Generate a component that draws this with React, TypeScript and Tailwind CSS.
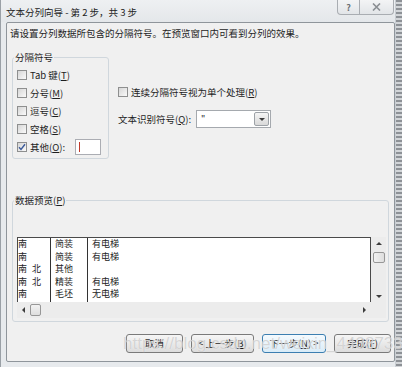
import type { ReactNode } from "react";

type Row = [string, string, string, string];

const previewRows: Row[] = [
  ["南", "", "简装", "有电梯"],
  ["南", "", "简装", "有电梯"],
  ["南", "北", "其他", ""],
  ["南", "北", "精装", "有电梯"],
  ["南", "", "毛坯", "无电梯"],
];

function Check({ checked = false }: { checked?: boolean }) {
  return (
    <span className="flex h-[10px] w-[10px] shrink-0 items-center justify-center border border-[#8e8f8f] bg-gradient-to-br from-[#d6d6d6] to-[#fafafa]">
      {checked && (
        <svg width="8" height="8" viewBox="0 0 8 8">
          <path d="M1 4.2 L3 6.4 L7 1.2" fill="none" stroke="#3b5a9a" strokeWidth="1.4" />
        </svg>
      )}
    </span>
  );
}

function Mn({ children }: { children: ReactNode }) {
  return <u className="underline-offset-[1px]">{children}</u>;
}

function Button({ children, width, focused = false }: { children: ReactNode; width: string; focused?: boolean }) {
  return (
    <button
      type="button"
      className={
        "flex h-[19px] items-center justify-center rounded-[3px] border text-[9.5px] leading-none text-[#1a1a1a] " +
        width +
        (focused
          ? " border-[#3c7fb1] bg-gradient-to-b from-[#f4fafe] to-[#d9ecf8]"
          : " border-[#7a7a7a] bg-gradient-to-b from-[#f6f6f6] to-[#dcdcdc]")
      }
    >
      {children}
    </button>
  );
}

function Arrow({ dir }: { dir: "up" | "down" | "left" | "right" }) {
  const d = {
    up: "M0 4 L3 1 L6 4 Z",
    down: "M0 1 L3 4 L6 1 Z",
    left: "M4 0 L1 3 L4 6 Z",
    right: "M1 0 L4 3 L1 6 Z",
  }[dir];
  const vertical = dir === "up" || dir === "down";
  return (
    <svg width={vertical ? 6 : 5} height={vertical ? 5 : 6} viewBox={vertical ? "0 0 6 5" : "0 0 5 6"}>
      <path d={d} fill="#3c3c3c" />
    </svg>
  );
}

export default function App() {
  return (
    <div className="relative flex h-[367px] w-[402px] overflow-hidden bg-[#e7eaed] font-['Noto_Sans_CJK_SC','Noto_Sans',sans-serif] text-[#1e1e1e]">
      <div className="flex w-[395px] flex-col border-l border-[#9aa0a6]">
        {/* Title bar */}
        <div className="flex h-[22px] items-start justify-between bg-gradient-to-b from-[#eef0f2] to-[#e4e7ea]">
          <div className="pl-[5px] pt-[6px] text-[9.5px] leading-[12px] text-[#222]">
            文本分列向导 - 第 2 步，共 3 步
          </div>
          <div className="flex pr-[1px]">
            <div className="flex h-[15px] w-[23px] items-center justify-center rounded-bl-[4px] border border-t-0 border-[#a9adb2] bg-gradient-to-b from-[#f3f4f5] to-[#e2e5e8] text-[9px] font-bold leading-none text-[#6b6f74]">
              ?
            </div>
            <div className="flex h-[15px] w-[34px] items-center justify-center rounded-br-[4px] border border-t-0 border-l-0 border-[#a9adb2] bg-gradient-to-b from-[#f3f4f5] to-[#e2e5e8]">
              <svg width="9" height="8" viewBox="0 0 9 8">
                <path d="M1 0.5 L8 7.5 M8 0.5 L1 7.5" stroke="#8a8e93" strokeWidth="1.6" />
              </svg>
            </div>
          </div>
        </div>

        <div className="flex">
          <div className="w-[5px]" />
          {/* Client area */}
          <div className="flex h-[340px] w-[389px] flex-col rounded-[2px] border border-[#8f959b] bg-[#f0f0f0]">
            <p className="pl-[3px] pt-[4px] text-[9.5px] leading-[12px]">
              请设置分列数据所包含的分隔符号。在预览窗口内可看到分列的效果。
            </p>

            <div className="mt-[12px] flex pl-[5px]">
              <fieldset className="w-[97px] rounded-[3px] border border-[#d0d7dd]">
                <legend className="ml-[1px] px-[1px] text-[9.5px] leading-[12px]">分隔符号</legend>
                <div className="flex flex-col pb-[2px] pt-[3px] text-[9.5px]">
                  <label className="flex h-[18px] items-center gap-[3px] pl-[4px]">
                    <Check />
                    <span>
                      Tab 键(<Mn>T</Mn>)
                    </span>
                  </label>
                  <label className="flex h-[18px] items-center gap-[3px] pl-[4px]">
                    <Check />
                    <span>
                      分号(<Mn>M</Mn>)
                    </span>
                  </label>
                  <label className="flex h-[18px] items-center gap-[3px] pl-[4px]">
                    <Check />
                    <span>
                      逗号(<Mn>C</Mn>)
                    </span>
                  </label>
                  <label className="flex h-[18px] items-center gap-[3px] pl-[4px]">
                    <Check />
                    <span>
                      空格(<Mn>S</Mn>)
                    </span>
                  </label>
                  <div className="flex h-[18px] items-center gap-[3px] pl-[4px]">
                    <Check checked />
                    <span>
                      其他(<Mn>O</Mn>):
                    </span>
                    <div className="ml-[7px] flex h-[16px] w-[26px] items-center border border-[#abadb3] bg-white pl-[3px]">
                      <span className="h-[10px] w-[1px] bg-[#c0392b]" />
                    </div>
                  </div>
                </div>
              </fieldset>

              <div className="ml-[9px] flex flex-col pt-[35px] text-[9.5px]">
                <label className="flex h-[12px] items-center gap-[3px]">
                  <Check />
                  <span>
                    连续分隔符号视为单个处理(<Mn>R</Mn>)
                  </span>
                </label>
                <div className="mt-[12px] flex h-[18px] items-center">
                  <span className="w-[78px]">
                    文本识别符号(<Mn>Q</Mn>):
                  </span>
                  <div className="flex h-[18px] w-[75px] border border-[#a5a9ae] bg-white">
                    <span className="flex-1 pl-[4px] pt-[1px] text-[9px] leading-[14px]">"</span>
                    <div className="m-[1px] flex w-[15px] items-center justify-center rounded-[2px] border border-[#9da2a7] bg-gradient-to-b from-[#f5f5f5] to-[#d9d9d9]">
                      <Arrow dir="down" />
                    </div>
                  </div>
                </div>
              </div>
            </div>

            {/* Data preview */}
            <div className="mt-[35px] pl-[5px]">
              <fieldset className="w-[377px] rounded-[3px] border border-[#d0d7dd]">
                <legend className="ml-[1px] px-[1px] text-[9.5px] leading-[12px]">
                  数据预览(<Mn>P</Mn>)
                </legend>
                <div className="grid grid-cols-[354px_15px] pb-[3px] pl-[4px] pt-[31px]">
                  <div className="flex h-[65px] border border-b-0 border-[#4a4a4a] bg-white text-[9px] leading-[12.5px]">
                    <div className="flex w-[33px] flex-col border-r border-[#333]">
                      {previewRows.map((r, i) => (
                        <div key={i} className="flex">
                          <span>{r[0]}</span>
                          {r[1] && <span className="ml-[5px]">{r[1]}</span>}
                        </div>
                      ))}
                    </div>
                    <div className="flex w-[37px] flex-col border-r border-[#333] pl-[4px]">
                      {previewRows.map((r, i) => (
                        <div key={i} className="h-[12.5px]">{r[2]}</div>
                      ))}
                    </div>
                    <div className="flex flex-1 flex-col pl-[4px]">
                      {previewRows.map((r, i) => (
                        <div key={i} className="h-[12.5px]">{r[3]}</div>
                      ))}
                    </div>
                  </div>
                  {/* vertical scrollbar */}
                  <div className="flex h-[65px] flex-col items-center bg-[#ececec]">
                    <div className="flex h-[12px] items-center">
                      <Arrow dir="up" />
                    </div>
                    <div className="mt-[3px] h-[11px] w-[12px] rounded-[2px] border border-[#979797] bg-gradient-to-r from-[#f2f2f2] to-[#dedede]" />
                    <div className="flex-1" />
                    <div className="flex h-[12px] items-center">
                      <Arrow dir="down" />
                    </div>
                  </div>
                  {/* horizontal scrollbar */}
                  <div className="flex h-[16px] items-center bg-[#ececec] px-[4px]">
                    <Arrow dir="left" />
                    <div className="ml-[4px] h-[12px] w-[11px] rounded-[2px] border border-[#979797] bg-gradient-to-b from-[#f2f2f2] to-[#dedede]" />
                    <div className="flex-1" />
                    <Arrow dir="right" />
                  </div>
                  <div className="bg-[#ececec]" />
                </div>
              </fieldset>
            </div>

            <div className="mt-[12px] flex justify-end gap-[8px] pr-[3px]">
              <Button width="w-[57px]">取消</Button>
              <Button width="w-[63px]">
                &lt; 上一步(<Mn>B</Mn>)
              </Button>
              <Button width="w-[64px]" focused>
                下一步(<Mn>N</Mn>) &gt;
              </Button>
              <Button width="w-[57px]">
                完成(<Mn>F</Mn>)
              </Button>
            </div>
          </div>
        </div>
      </div>

      {/* right frame edge */}
      <div className="w-[7px] border-l border-[#c9ced3] bg-[repeating-linear-gradient(180deg,#8d9196_0px,#8d9196_2px,#d2d5d8_2px,#d2d5d8_4px)]" />

      {/* watermark */}
      <div className="pointer-events-none absolute left-[123px] top-[334px] whitespace-nowrap font-['Liberation_Sans',sans-serif] text-[17px] leading-[20px] text-[rgba(175,175,175,0.5)] [text-shadow:0_0_1px_rgba(255,255,255,0.9)]">
        https://blog.csdn.net/weixin_44387339
      </div>
    </div>
  );
}
